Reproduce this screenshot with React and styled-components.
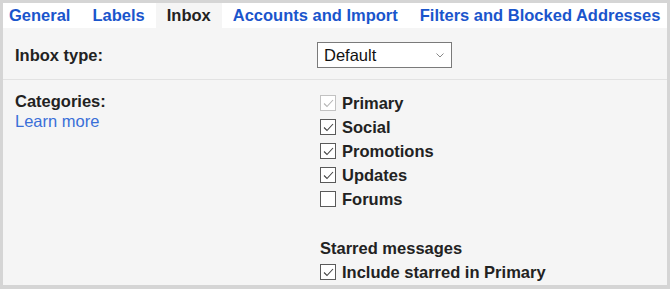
import styled, { createGlobalStyle } from 'styled-components';

const GlobalStyle = createGlobalStyle`
  html, body {
    margin: 0;
    padding: 0;
    background: #ffffff;
  }
  body {
    font-family: "Liberation Sans", Arial, sans-serif;
  }
`;

const Frame = styled.div`
  width: 670px;
  height: 289px;
  box-sizing: border-box;
  border: 3px solid #d5d5d5;
  border-bottom-width: 4px;
  background: #f5f5f5;
  display: flex;
  flex-direction: column;
  overflow: hidden;
`;

const TabBar = styled.div`
  display: flex;
  height: 25px;
  background: #ffffff;
  flex-shrink: 0;
`;

const Tab = styled.div`
  display: flex;
  align-items: center;
  padding: 0 11px;
  font-size: 16.5px;
  font-weight: bold;
  color: ${(p) => (p.active ? '#222222' : '#1a55cc')};
  background: ${(p) => (p.active ? '#f5f5f5' : 'transparent')};
  white-space: nowrap;

  &:first-child {
    padding-left: 6px;
  }
`;

const Row = styled.div`
  display: grid;
  grid-template-columns: 302px 1fr;
  padding: ${(p) => p.pad || '0'};
  padding-left: 12px;
  border-bottom: ${(p) => (p.divider ? '1px solid #e2e2e2' : 'none')};
`;

const Label = styled.div`
  font-size: 16.5px;
  font-weight: bold;
  color: #222222;
  line-height: 20px;
`;

const LearnMore = styled.a`
  display: block;
  font-size: 16.5px;
  color: #3a6fd8;
  text-decoration: none;
  line-height: 20px;
`;

const Select = styled.div`
  width: 135px;
  height: 26px;
  box-sizing: border-box;
  border: 1px solid #7a7a7a;
  background: #ffffff;
  display: flex;
  align-items: center;
  justify-content: space-between;
  padding: 0 7px 0 6px;
  font-size: 16.5px;
  color: #111111;
`;

const Options = styled.div`
  display: flex;
  flex-direction: column;
  padding-left: 3px;
`;

const Option = styled.label`
  display: flex;
  align-items: center;
  gap: 6px;
  height: 24px;
  font-size: 16.5px;
  font-weight: bold;
  color: #222222;
`;

const Box = styled.span`
  width: 16px;
  height: 16px;
  box-sizing: border-box;
  border: 1px solid ${(p) => (p.disabled ? '#c2c2c2' : '#5a5a5a')};
  background: #ffffff;
  display: flex;
  align-items: center;
  justify-content: center;
`;

const SubHeading = styled.div`
  font-size: 16.5px;
  font-weight: bold;
  color: #222222;
  height: 24px;
  display: flex;
  align-items: center;
  margin-top: 25px;
`;

function Check({ checked, disabled }) {
  return (
    <Box disabled={disabled}>
      {checked && (
        <svg width="11" height="9" viewBox="0 0 11 9">
          <path
            d="M1 4.5 L4 7.5 L10 1"
            fill="none"
            stroke={disabled ? '#b5b5b5' : '#444444'}
            strokeWidth="1.1"
          />
        </svg>
      )}
    </Box>
  );
}

const categories = [
  { name: 'Primary', checked: true, disabled: true },
  { name: 'Social', checked: true },
  { name: 'Promotions', checked: true },
  { name: 'Updates', checked: true },
  { name: 'Forums', checked: false },
];

export default function App() {
  return (
    <>
      <GlobalStyle />
      <Frame>
        <TabBar>
          <Tab>General</Tab>
          <Tab>Labels</Tab>
          <Tab active>Inbox</Tab>
          <Tab>Accounts and Import</Tab>
          <Tab>Filters and Blocked Addresses</Tab>
        </TabBar>

        <Row pad="14px 0 11px" divider>
          <Label style={{ alignSelf: 'center' }}>Inbox type:</Label>
          <div>
            <Select>
              <span>Default</span>
              <svg width="8" height="5" viewBox="0 0 8 5">
                <path d="M0.5 0.5 L4 4 L7.5 0.5" fill="none" stroke="#888" strokeWidth="1" />
              </svg>
            </Select>
          </div>
        </Row>

        <Row pad="11px 0 0">
          <div>
            <Label>Categories:</Label>
            <LearnMore href="#">Learn more</LearnMore>
          </div>
          <Options>
            {categories.map((c) => (
              <Option key={c.name}>
                <Check checked={c.checked} disabled={c.disabled} />
                {c.name}
              </Option>
            ))}
            <SubHeading>Starred messages</SubHeading>
            <Option>
              <Check checked />
              Include starred in Primary
            </Option>
          </Options>
        </Row>
      </Frame>
    </>
  );
}
